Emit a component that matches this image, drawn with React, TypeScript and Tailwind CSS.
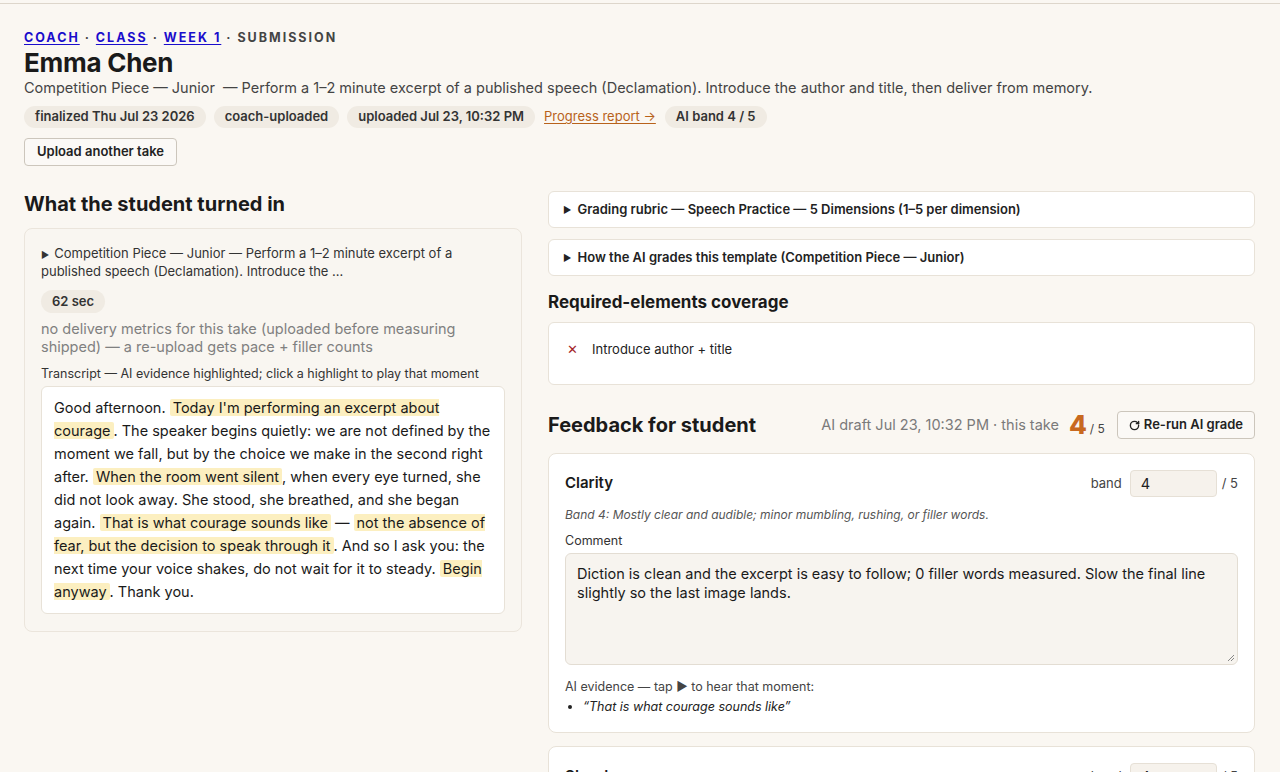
import { RotateCw } from "lucide-react";

const pill = "inline-flex items-center h-[22px] px-[11px] rounded-full bg-[#f0ebe3] text-[13px] font-semibold text-[#333]";

function Hl({ children }: { children: React.ReactNode }) {
  return <mark className="bg-[#fcefc0] text-inherit px-[3px] rounded-[2px] cursor-pointer">{children}</mark>;
}

function Summary({ children }: { children: React.ReactNode }) {
  return (
    <div className="rounded-md border border-[#e8e2d8] bg-white px-[14px] h-[37px] flex items-center text-[13px] font-semibold text-[#222]">
      <span className="text-[9px] mr-[6px]">▶</span>
      {children}
    </div>
  );
}

function BandRow({ name }: { name: string }) {
  return (
    <div className="flex items-center justify-between">
      <div className="text-[15px] font-semibold text-[#1a1a1a]">{name}</div>
      <div className="flex items-center gap-[8px] text-[13px] text-[#444]">
        <span>band</span>
        <div className="w-[87px] h-[27px] rounded-[4px] border border-[#e6e0d6] bg-[#f6f2ec] px-[10px] flex items-center text-[14.5px] text-[#222]">4</div>
        <span className="ml-[-3px]">/ 5</span>
      </div>
    </div>
  );
}

export default function App() {
  return (
    <div className="min-h-screen bg-[#faf7f2] text-[#1a1a1a] font-['Inter',sans-serif] overflow-hidden h-[772px]">
      <div className="h-[4px] border-b border-[#ddd6cb]" />
      <div className="px-[24px] pt-[26px]">
        {/* Breadcrumb */}
        <div className="text-[12.5px] font-bold tracking-[0.16em] uppercase text-[#444] leading-[16px]">
          <a className="text-[#1a0dcc] underline underline-offset-2">Coach</a>
          <span> · </span>
          <a className="text-[#1a0dcc] underline underline-offset-2">Class</a>
          <span> · </span>
          <a className="text-[#1a0dcc] underline underline-offset-2">Week 1</a>
          <span> · Submission</span>
        </div>
        <h1 className="text-[26px] font-bold leading-[34px] mt-[0px] tracking-[-0.01em]">Emma Chen</h1>
        <p className="text-[14.5px] text-[#444] leading-[20px] mt-[-2px]">
          Competition Piece — Junior&nbsp; — Perform a 1–2 minute excerpt of a published speech (Declamation). Introduce the author and title, then deliver from memory.
        </p>
        <div className="flex items-center gap-[8px] mt-[8px]">
          <span className={pill}>finalized Thu Jul 23 2026</span>
          <span className={pill}>coach-uploaded</span>
          <span className={pill}>uploaded Jul 23, 10:32 PM</span>
          <a className="text-[13px] text-[#b8621b] underline underline-offset-2 mx-[1px]">Progress report →</a>
          <span className={pill}>AI band 4 / 5</span>
        </div>
        <button className="mt-[10px] h-[28px] px-[12px] rounded-[4px] border border-[#ccc6bc] bg-[#fbf9f6] text-[13px] font-semibold text-[#222]">
          Upload another take
        </button>

        <div className="grid grid-cols-[498px_1fr] gap-[26px] mt-[25px] pr-[1px]">
          {/* Left column */}
          <div>
            <h2 className="text-[20px] font-bold leading-[26px]">What the student turned in</h2>
            <div className="mt-[11px] rounded-lg border border-[#ebe5dc] bg-[#f9f6f1] px-[16px] pt-[16px] pb-[17px]">
              <div className="text-[13px] text-[#333] leading-[16px]">
                <span className="text-[9px] mr-[5px]">▶</span>
                Competition Piece — Junior — Perform a 1–2 minute excerpt of a published speech (Declamation). Introduce the …
              </div>
              <div className="mt-[9px]">
                <span className={`${pill} h-[23px]`}>62 sec</span>
              </div>
              <p className="text-[14.5px] text-[#808080] leading-[18px] mt-[7px]">
                no delivery metrics for this take (uploaded before measuring shipped) — a re-upload gets pace + filler counts
              </p>
              <div className="text-[12.5px] text-[#333] mt-[10px] leading-[16px]">
                Transcript — AI evidence highlighted; click a highlight to play that moment
              </div>
              <div className="mt-[4px] rounded-md border border-[#e8e2d8] bg-white px-[12px] pt-[9px] pb-[10px] text-[14.5px] leading-[23px] text-[#1a1a1a]">
                Good afternoon. <Hl>Today I'm performing an excerpt about courage</Hl>. The speaker begins quietly: we are not defined by the moment we fall, but by the choice we make in the second right after. <Hl>When the room went silent</Hl>, when every eye turned, she did not look away. She stood, she breathed, and she began again. <Hl>That is what courage sounds like</Hl> — <Hl>not the absence of fear, but the decision to speak through it</Hl>. And so I ask you: the next time your voice shakes, do not wait for it to steady. <Hl>Begin anyway</Hl>. Thank you.
              </div>
            </div>
          </div>

          {/* Right column */}
          <div className="flex flex-col">
            <Summary>Grading rubric — Speech Practice — 5 Dimensions (1–5 per dimension)</Summary>
            <div className="mt-[11px]">
              <Summary>How the AI grades this template (Competition Piece — Junior)</Summary>
            </div>
            <h3 className="text-[17px] font-bold leading-[24px] mt-[14px]">Required-elements coverage</h3>
            <div className="mt-[8px] rounded-md border border-[#e8e2d8] bg-white h-[63px] px-[18px] pt-[17px]">
              <div className="flex items-center text-[13px] text-[#222]">
                <span className="text-[#a3262a] text-[13px] w-[25px]">✕</span>
                Introduce author + title
              </div>
            </div>

            <div className="flex items-center justify-between mt-[26px]">
              <h2 className="text-[20px] font-bold leading-[28px]">Feedback for student</h2>
              <div className="flex items-center">
                <span className="text-[14.5px] text-[#7a7a7a]">AI draft Jul 23, 10:32 PM · this take</span>
                <span className="text-[26px] font-extrabold text-[#c8691f] ml-[10px] leading-none">4</span>
                <span className="text-[12px] text-[#444] ml-[3px] mt-[8px]">/ 5</span>
                <button className="ml-[12px] h-[28px] px-[11px] rounded-[4px] border border-[#ccc6bc] bg-[#fbf9f6] text-[13px] font-semibold text-[#222] flex items-center gap-[4px]">
                  <RotateCw size={11} strokeWidth={3} />
                  Re-run AI grade
                </button>
              </div>
            </div>

            <div className="mt-[14px] rounded-lg border border-[#e8e2d8] bg-white px-[16px] pt-[16px] pb-[17px]">
              <BandRow name="Clarity" />
              <div className="text-[12px] italic text-[#555] mt-[10px] leading-[16px]">
                Band 4: Mostly clear and audible; minor mumbling, rushing, or filler words.
              </div>
              <div className="text-[12.5px] text-[#333] mt-[10px] leading-[16px]">Comment</div>
              <div className="relative mt-[4px] h-[112px] rounded-md border border-[#e3ddd3] bg-[#f7f4ef] px-[11px] py-[10px] text-[14.5px] leading-[19px] text-[#1a1a1a]">
                Diction is clean and the excerpt is easy to follow; 0 filler words measured. Slow the final line slightly so the last image lands.
                <svg className="absolute right-[2px] bottom-[2px]" width="8" height="8" viewBox="0 0 8 8">
                  <path d="M7 1 L1 7 M7 4 L4 7" stroke="#888" strokeWidth="1" />
                </svg>
              </div>
              <div className="text-[12.5px] text-[#444] mt-[14px] leading-[16px]">AI evidence — tap ▶ to hear that moment:</div>
              <ul className="list-disc pl-[18px] mt-[4px] text-[12.5px] italic text-[#222] leading-[16px]">
                <li>“That is what courage sounds like”</li>
              </ul>
            </div>

            <div className="mt-[13px] rounded-lg border border-[#e8e2d8] bg-white px-[16px] pt-[16px] pb-[14px]">
              <BandRow name="Structure" />
            </div>
          </div>
        </div>
      </div>
    </div>
  );
}
